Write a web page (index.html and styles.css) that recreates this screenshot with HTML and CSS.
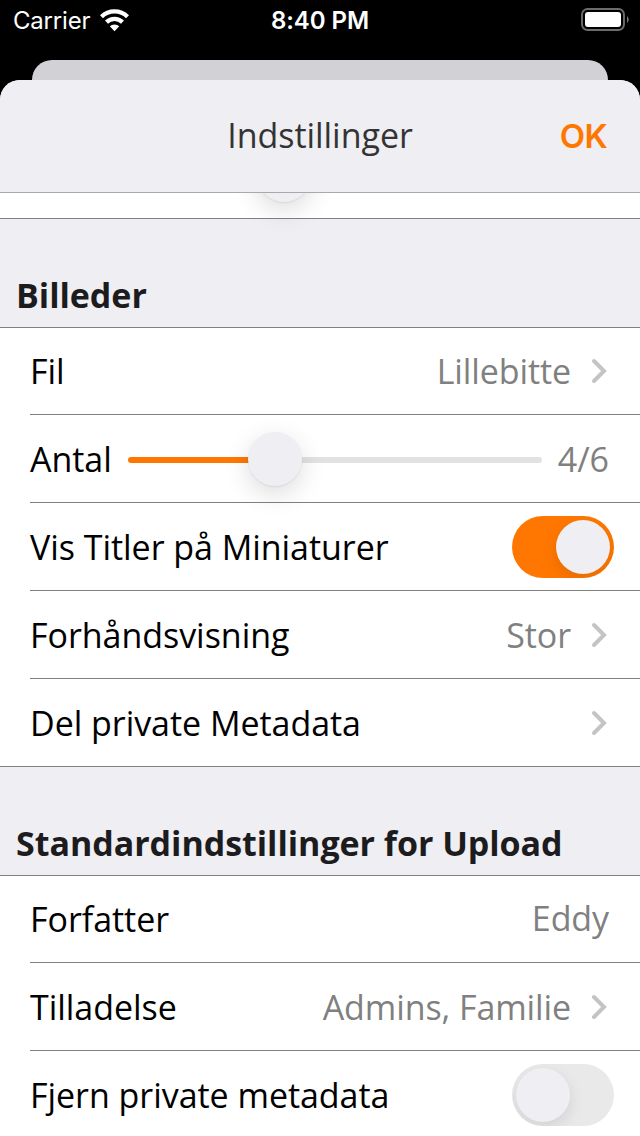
FILE: index.html
```html
<!DOCTYPE html>
<html lang="da"><head><meta charset="utf-8"><title>Indstillinger</title><link rel="stylesheet" href="styles.css"></head>
<body>
<div class="status"><div class="carrier"><span>Carrier</span><svg class="wifi" width="29" height="23" viewBox="0 0 29 23"><g fill="none" stroke="#fff" stroke-width="4.300"><path d="M1.500 7.700a18.700 18.700 0 0 1 26 0"/><path d="M6.500 13.100a11.600 11.600 0 0 1 16 0"/></g><path d="M14.500 22.200l-4.700-4.900a6.800 6.800 0 0 1 9.400 0z" fill="#fff"/></svg></div><time>8:40 PM</time>
<svg class="battery" width="48" height="24" viewBox="0 0 48 24"><rect x="1" y="1" width="42" height="21" rx="5.500" fill="none" stroke="#6c6c6c" stroke-width="1.900"/><rect x="4" y="4" width="36" height="15" rx="3" fill="#fff"/><path d="M46 8q3.500 3.500 0 7z" fill="#777"/></svg></div>
<div class="behind"></div>
<main class="sheet">
<header class="nav"><h1>Indstillinger</h1><span class="ok">OK</span></header>
<div class="peek"><i class="knob"></i></div>
<h2>Billeder</h2>
<section>
<div class="row"><span>Fil</span><span class="value">Lillebitte</span><svg class="chev" viewBox="0 0 16 26"><path d="M3 3l10 10-10 10"/></svg></div>
<div class="row"><span>Antal</span><div class="slider"><i class="track"></i><i class="knob"></i></div><span class="count">4/6</span></div>
<div class="row"><span>Vis Titler på Miniaturer</span><div class="switch on"><i class="knob"></i></div></div>
<div class="row"><span>Forhåndsvisning</span><span class="value">Stor</span><svg class="chev" viewBox="0 0 16 26"><path d="M3 3l10 10-10 10"/></svg></div>
<div class="row"><span>Del private Metadata</span><span class="value"></span><svg class="chev" viewBox="0 0 16 26"><path d="M3 3l10 10-10 10"/></svg></div>
</section>
<h2>Standardindstillinger for Upload</h2>
<section>
<div class="row"><span>Forfatter</span><span class="value plain">Eddy</span></div>
<div class="row"><span>Tilladelse</span><span class="value">Admins, Familie</span><svg class="chev" viewBox="0 0 16 26"><path d="M3 3l10 10-10 10"/></svg></div>
<div class="row"><span>Fjern private metadata</span><div class="switch"><i class="knob"></i></div></div>
</section>
</main>
</body></html>
```
FILE: styles.css
```css
*{box-sizing:border-box}
body{margin:0;width:640px;height:1136px;overflow:hidden;background:#000;font-family:"Open Sans",sans-serif;font-size:34px;letter-spacing:-.04px;color:#000}
.status{height:60px;padding:8px 11px 0 13px;display:grid;grid-template-columns:1fr auto 1fr;align-items:start;color:#fff;font:24px/25px Inter,sans-serif}
.carrier{display:flex;gap:10px;letter-spacing:-.2px}
.wifi{margin-top:1px}
.status time{font-weight:600;margin-right:2px}
.battery{justify-self:end}
.behind{height:20px;margin:0 32px;border-radius:20px 20px 0 0;background:#d2d1d6}
.sheet{height:1056px;background:#efeef3;border-radius:20px 20px 0 0;overflow:hidden}
.nav{height:113px;padding-bottom:2px;border-bottom:1px solid #a9a9ac;background:#efeef3;display:grid;grid-template-columns:1fr auto 1fr;align-items:center;position:relative;z-index:1}
h1{grid-column:2;margin:0;font-size:34px;font-weight:400;color:#333}
.ok{justify-self:end;margin-right:33px;padding-top:2px;font:600 33px/46px Inter,sans-serif;letter-spacing:-.7px;color:#ff7700}
.peek{display:flow-root;height:26px;background:#fff;border-bottom:1px solid #808080}
.knob{display:block;width:54px;height:54px;border-radius:50%;background:#efeef3;box-shadow:0 8px 26px #00000024,0 1px 2px #00000012}
.peek .knob{margin:-45px 0 0 257px}
h2{height:109px;margin:0;padding:53px 16px 0;font-size:34px;line-height:46px;font-weight:700;color:#1c1c1e;border-bottom:1px solid #808080}
section{background:#fff;border-bottom:1px solid #808080}
.row{height:88px;margin-left:30px;display:flex;align-items:center;border-bottom:1px solid #808080}
.row:first-child{height:87px}
.row:last-child{height:87px;border:0}
.value{margin-left:auto;color:#808080;letter-spacing:-.1px}
.plain{margin-right:31px;padding-bottom:3px}
.chev{width:16px;height:26px;margin:0 33px 0 20px;fill:none;stroke:#c4c4c6;stroke-width:4;stroke-linecap:round}
.slider{flex:1;height:54px;margin:0 16px;position:relative;display:flex;align-items:center}
.track{flex:1;height:6px;margin-top:2px;border-radius:3px;background:linear-gradient(90deg,#ff7700 35%,#e2e2e3 35%)}
.slider .knob{position:absolute;left:120px;top:0}
.count{color:#808080;margin-right:31px}
.switch{width:102px;height:62px;border-radius:31px;background:#e9e9ea;padding:4px;margin:0 26px 0 auto;overflow:hidden}
.switch .knob{box-shadow:0 6px 16px #0000001a}
.on{background:#ff7700;padding-left:44px}
```
